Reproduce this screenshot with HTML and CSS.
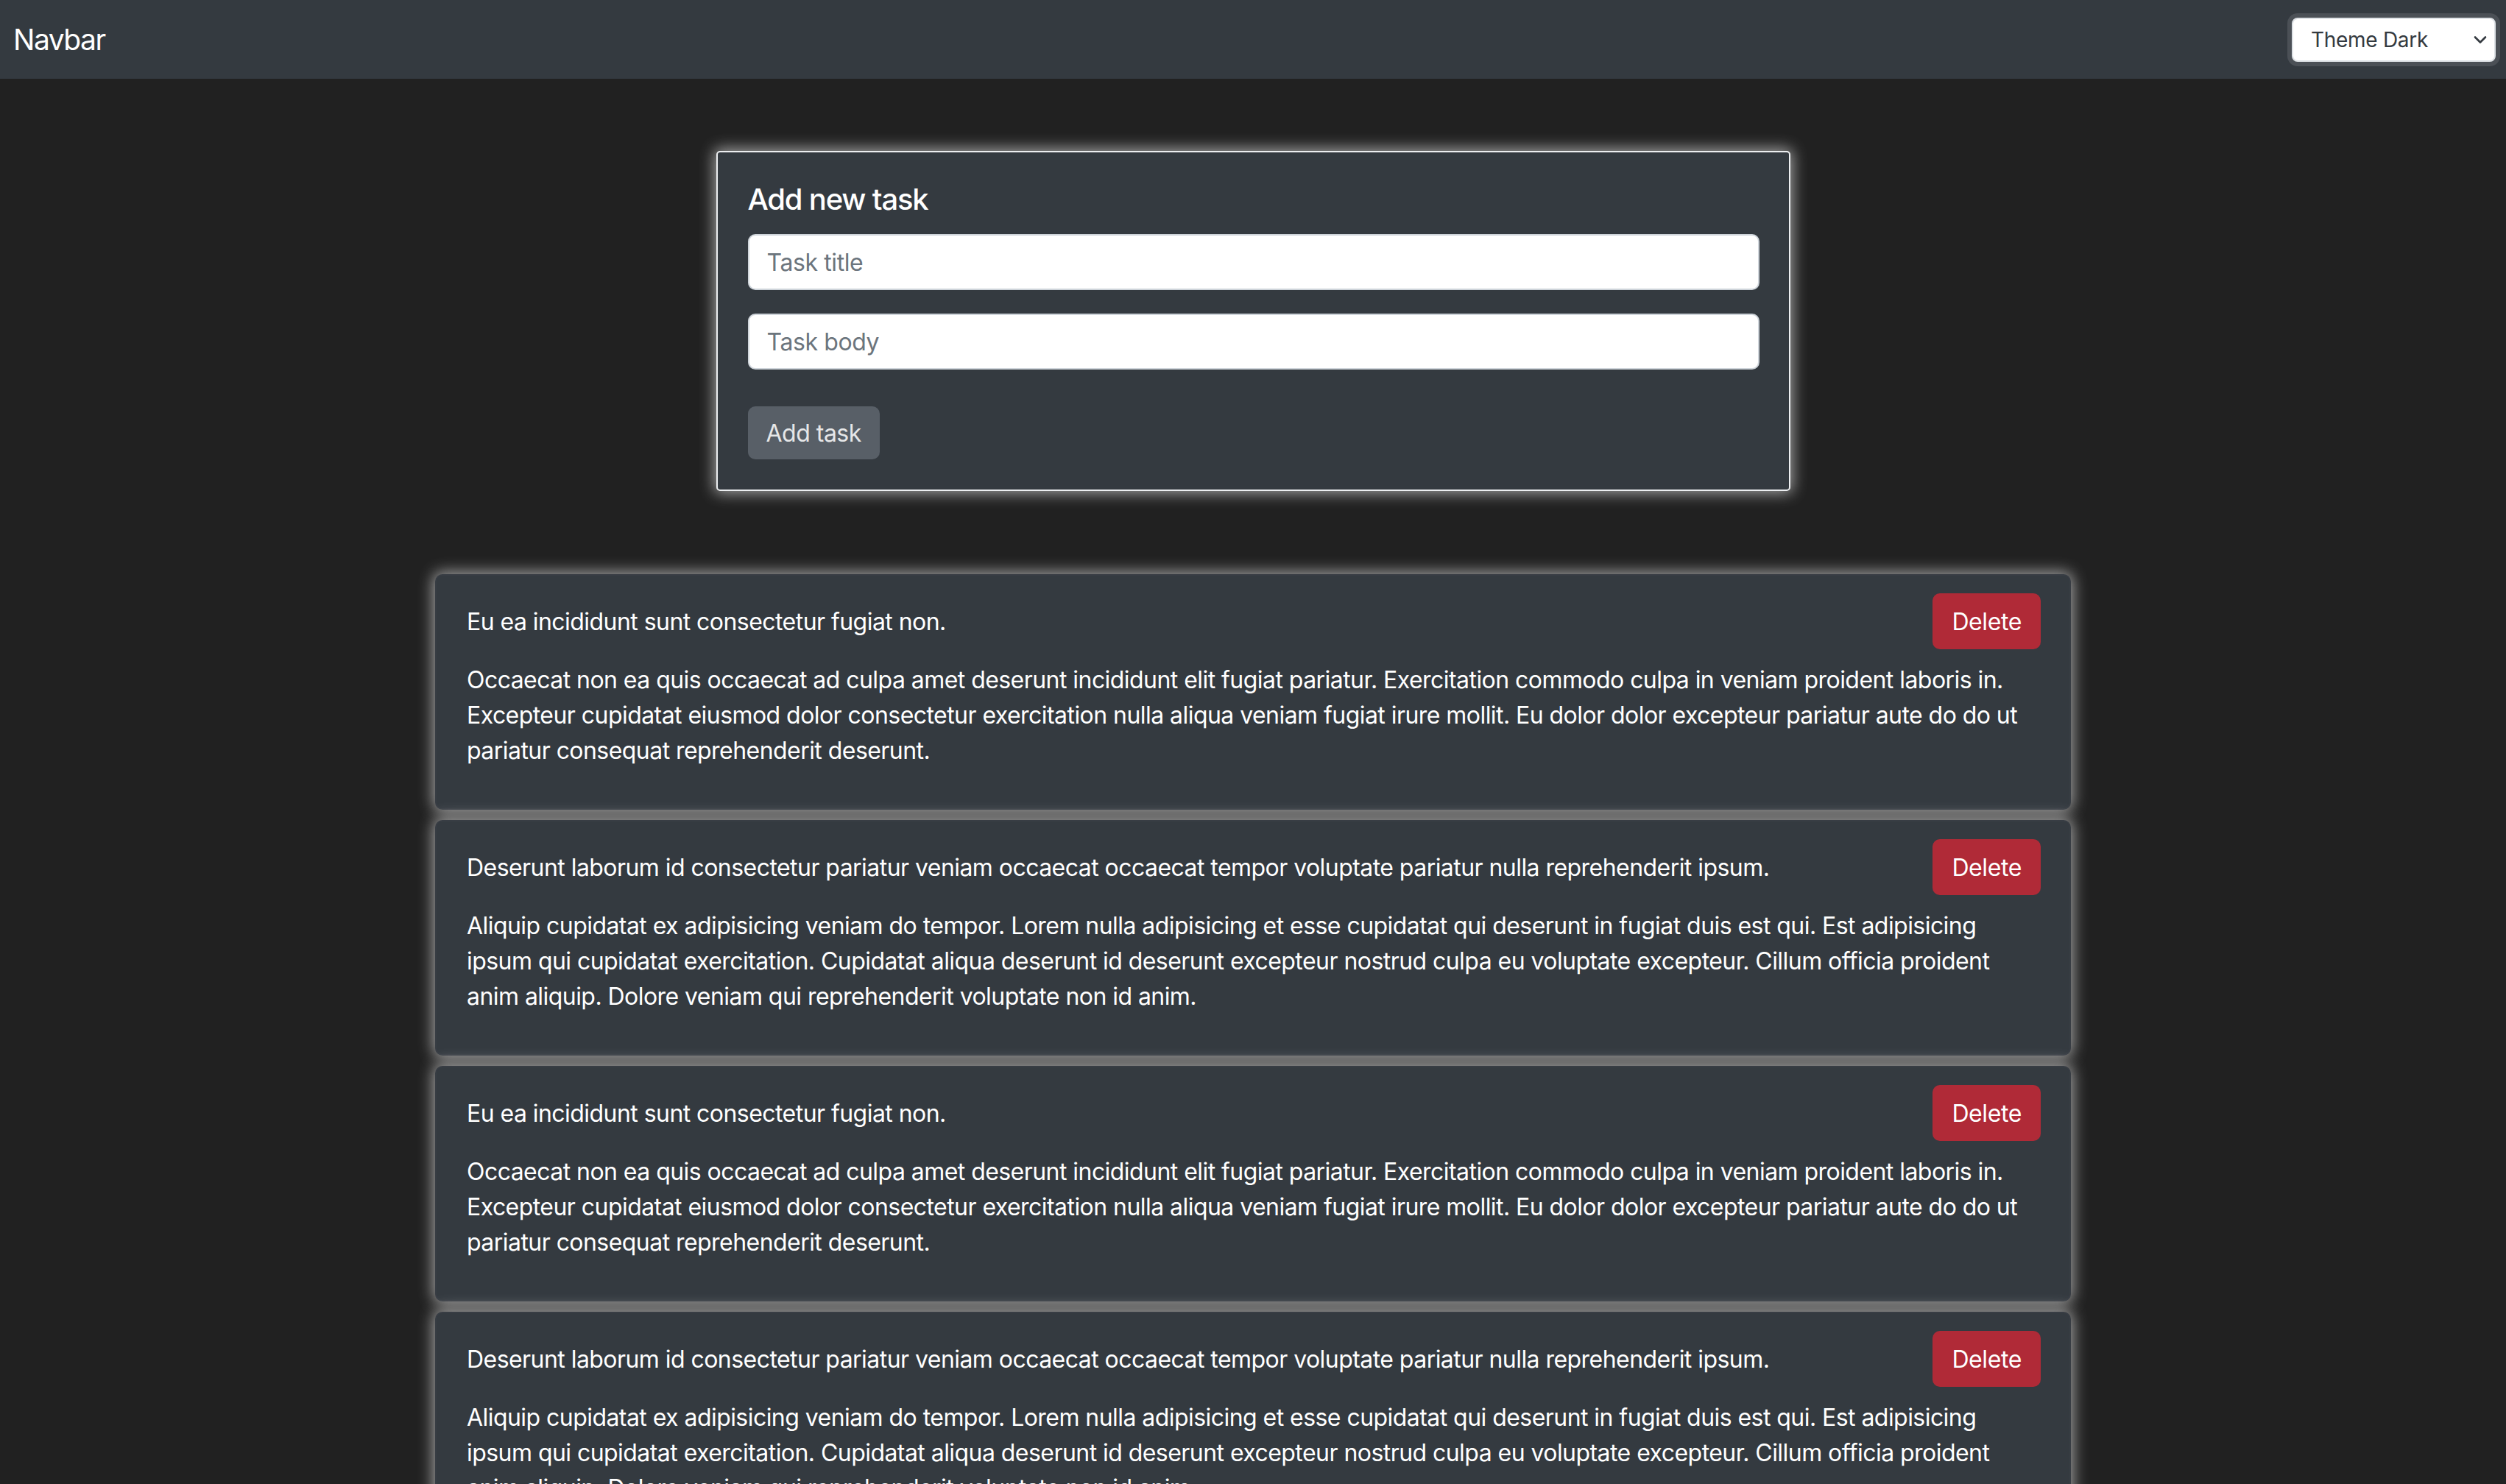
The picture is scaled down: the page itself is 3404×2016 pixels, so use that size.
FILE: index.html
```html
<!DOCTYPE html>
<html lang="en">
<head>
<meta charset="utf-8">
<title>Tasks</title>
<link rel="stylesheet" href="styles.css">
</head>
<body>
<nav class="navbar">
  <span class="brand">Navbar</span>
  <div class="select-wrap">
    <select class="theme-select">
      <option>Theme Dark</option>
      <option>Theme Light</option>
    </select>
    <svg class="chevron" width="18" height="12" viewBox="0 0 18 12"><path d="M2 2.5 L9 9.5 L16 2.5" fill="none" stroke="#343a40" stroke-width="2.6" stroke-linecap="round" stroke-linejoin="round"/></svg>
  </div>
</nav>
<main class="main">
  <section class="form-card">
    <h5 class="form-title">Add new task</h5>
    <input class="field" type="text" placeholder="Task title">
    <input class="field" type="text" placeholder="Task body">
    <button class="add-btn" disabled>Add task</button>
  </section>
  <section class="task-list">
    <article class="task-card">
      <div class="task-head">
        <span class="task-title">Eu ea incididunt sunt consectetur fugiat non.</span>
        <button class="delete-btn">Delete</button>
      </div>
      <p class="task-body">Occaecat non ea quis occaecat ad culpa amet deserunt incididunt elit fugiat pariatur. Exercitation commodo culpa in veniam proident laboris in. Excepteur cupidatat eiusmod dolor consectetur exercitation nulla aliqua veniam fugiat irure mollit. Eu dolor dolor excepteur pariatur aute do do ut pariatur consequat reprehenderit deserunt.</p>
    </article>
    <article class="task-card">
      <div class="task-head">
        <span class="task-title">Deserunt laborum id consectetur pariatur veniam occaecat occaecat tempor voluptate pariatur nulla reprehenderit ipsum.</span>
        <button class="delete-btn">Delete</button>
      </div>
      <p class="task-body">Aliquip cupidatat ex adipisicing veniam do tempor. Lorem nulla adipisicing et esse cupidatat qui deserunt in fugiat duis est qui. Est adipisicing ipsum qui cupidatat exercitation. Cupidatat aliqua deserunt id deserunt excepteur nostrud culpa eu voluptate excepteur. Cillum officia proident anim aliquip. Dolore veniam qui reprehenderit voluptate non id anim.</p>
    </article>
    <article class="task-card">
      <div class="task-head">
        <span class="task-title">Eu ea incididunt sunt consectetur fugiat non.</span>
        <button class="delete-btn">Delete</button>
      </div>
      <p class="task-body">Occaecat non ea quis occaecat ad culpa amet deserunt incididunt elit fugiat pariatur. Exercitation commodo culpa in veniam proident laboris in. Excepteur cupidatat eiusmod dolor consectetur exercitation nulla aliqua veniam fugiat irure mollit. Eu dolor dolor excepteur pariatur aute do do ut pariatur consequat reprehenderit deserunt.</p>
    </article>
    <article class="task-card">
      <div class="task-head">
        <span class="task-title">Deserunt laborum id consectetur pariatur veniam occaecat occaecat tempor voluptate pariatur nulla reprehenderit ipsum.</span>
        <button class="delete-btn">Delete</button>
      </div>
      <p class="task-body">Aliquip cupidatat ex adipisicing veniam do tempor. Lorem nulla adipisicing et esse cupidatat qui deserunt in fugiat duis est qui. Est adipisicing ipsum qui cupidatat exercitation. Cupidatat aliqua deserunt id deserunt excepteur nostrud culpa eu voluptate excepteur. Cillum officia proident anim aliquip. Dolore veniam qui reprehenderit voluptate non id anim.</p>
    </article>
  </section>
</main>
</body>
</html>
```
FILE: styles.css
```css
html, body {
  margin: 0;
  padding: 0;
}
body {
  background: #212121;
  color: #fff;
  font-family: Inter, "Noto Sans", Roboto, sans-serif;
  height: 100vh;
  overflow: hidden;
}
.navbar {
  height: 107px;
  box-sizing: border-box;
  background: #343a40;
  display: flex;
  align-items: center;
  justify-content: space-between;
  padding: 0 14px 0 18px;
}
.brand {
  font-size: 39px;
  line-height: 48px;
  letter-spacing: -1.5px;
  color: #fff;
}
.select-wrap {
  position: relative;
  display: flex;
}
.theme-select {
  appearance: none;
  -webkit-appearance: none;
  width: 277px;
  height: 60px;
  box-sizing: border-box;
  border: 2px solid #dee2e6;
  border-radius: 8px;
  box-shadow: 0 0 0 6px #4b5056;
  background: #fff;
  color: #343a40;
  font-family: Inter, "Noto Sans", sans-serif;
  font-size: 28px;
  letter-spacing: -0.3px;
  padding: 0 50px 0 24px;
  outline: none;
}
.chevron {
  position: absolute;
  right: 12px;
  top: 24px;
  pointer-events: none;
}
.main {
  padding-top: 98px;
}
.form-card {
  width: 1459px;
  box-sizing: border-box;
  margin: 0 auto;
  background: #343a40;
  border: 2px solid #eceef0;
  border-radius: 5px;
  padding: 40px 40px 41px 41px;
  box-shadow: 0 0 20px 3px rgba(205, 205, 205, 0.75);
  display: flex;
  flex-direction: column;
  align-items: flex-start;
}
.form-title {
  margin: 0 0 23px;
  font-size: 40px;
  line-height: 48px;
  font-weight: 500;
  letter-spacing: -1.2px;
}
.field {
  width: 100%;
  height: 76px;
  box-sizing: border-box;
  border: 2px solid #ced4da;
  border-radius: 10px;
  padding: 0 24px;
  font-family: Inter, "Noto Sans", sans-serif;
  font-size: 32px;
  letter-spacing: -0.4px;
  color: #212529;
  background: #fff;
  margin: 0 0 32px;
  outline: none;
}
.field::placeholder {
  color: #6c757d;
}
.field + .field {
  margin-bottom: 50px;
}
.add-btn {
  height: 72px;
  padding: 0 25px;
  border: none;
  border-radius: 10px;
  background: #585f67;
  color: #e6e7e8;
  font-family: Inter, "Noto Sans", sans-serif;
  font-size: 32px;
  letter-spacing: -0.5px;
}
.task-list {
  width: 2222px;
  margin: 113px auto 0;
}
.task-card {
  box-sizing: border-box;
  background: #343a40;
  border: 2px solid #383d44;
  border-radius: 10px;
  padding: 24px 39px 24px 41px;
  margin-bottom: 14px;
  box-shadow: 0 0 20px 3px rgba(205, 205, 205, 0.75);
}
.task-head {
  display: flex;
  align-items: center;
  justify-content: space-between;
  gap: 40px;
  margin-bottom: 18px;
}
.task-title {
  font-size: 32px;
  line-height: 48px;
  letter-spacing: -0.55px;
  padding-top: 2px;
}
.delete-btn {
  flex-shrink: 0;
  height: 76px;
  padding: 0 26px;
  border: none;
  border-radius: 10px;
  background: #b02a37;
  color: #fff;
  font-family: Inter, "Noto Sans", sans-serif;
  font-size: 32px;
  letter-spacing: -0.4px;
}
.task-body {
  margin: 0 0 30px;
  font-size: 32px;
  line-height: 48px;
  letter-spacing: -0.55px;
}
```
